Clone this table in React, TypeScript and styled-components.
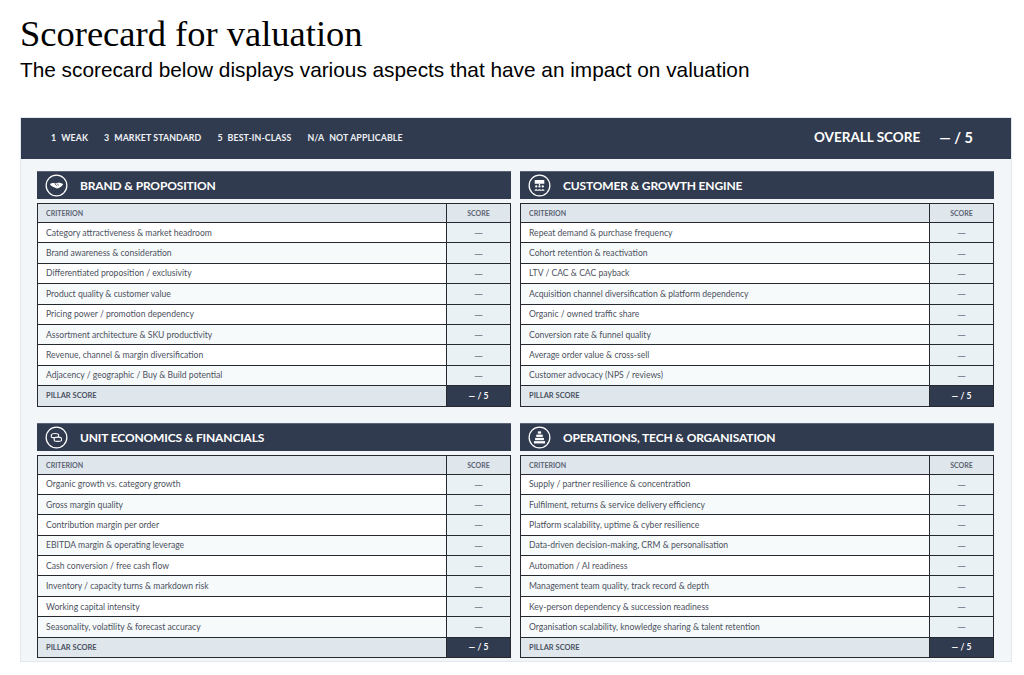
import styled, { createGlobalStyle } from 'styled-components';

const GlobalStyle = createGlobalStyle`
	html, body {
		margin: 0;
		padding: 0;
		background: #ffffff;
	}
`;

const DARK = '#313b4f';

type Pillar = {
	title: string;
	icon: 'brand' | 'customer' | 'unit' | 'ops';
	criteria: string[];
};

const pillars: Pillar[] = [
	{
		title: 'BRAND & PROPOSITION',
		icon: 'brand',
		criteria: [
			'Category attractiveness & market headroom',
			'Brand awareness & consideration',
			'Differentiated proposition / exclusivity',
			'Product quality & customer value',
			'Pricing power / promotion dependency',
			'Assortment architecture & SKU productivity',
			'Revenue, channel & margin diversification',
			'Adjacency / geographic / Buy & Build potential',
		],
	},
	{
		title: 'CUSTOMER & GROWTH ENGINE',
		icon: 'customer',
		criteria: [
			'Repeat demand & purchase frequency',
			'Cohort retention & reactivation',
			'LTV / CAC & CAC payback',
			'Acquisition channel diversification & platform dependency',
			'Organic / owned traffic share',
			'Conversion rate & funnel quality',
			'Average order value & cross-sell',
			'Customer advocacy (NPS / reviews)',
		],
	},
	{
		title: 'UNIT ECONOMICS & FINANCIALS',
		icon: 'unit',
		criteria: [
			'Organic growth vs. category growth',
			'Gross margin quality',
			'Contribution margin per order',
			'EBITDA margin & operating leverage',
			'Cash conversion / free cash flow',
			'Inventory / capacity turns & markdown risk',
			'Working capital intensity',
			'Seasonality, volatility & forecast accuracy',
		],
	},
	{
		title: 'OPERATIONS, TECH & ORGANISATION',
		icon: 'ops',
		criteria: [
			'Supply / partner resilience & concentration',
			'Fulfilment, returns & service delivery efficiency',
			'Platform scalability, uptime & cyber resilience',
			'Data-driven decision-making, CRM & personalisation',
			'Automation / AI readiness',
			'Management team quality, track record & depth',
			'Key-person dependency & succession readiness',
			'Organisation scalability, knowledge sharing & talent retention',
		],
	},
];

const legend = [
	['1', 'WEAK'],
	['3', 'MARKET STANDARD'],
	['5', 'BEST-IN-CLASS'],
	['N/A', 'NOT APPLICABLE'],
];

const PillarIcon = ({ kind }: { kind: Pillar['icon'] }) => (
	<svg width="23" height="23" viewBox="0 0 24 24" fill="none">
		<circle cx="12" cy="12" r="10.8" stroke="#ffffff" strokeWidth="1.3" />
		{kind === 'brand' && (
			<g fill="#ffffff">
				<path d="M5 10.4 L8.4 9 L10.6 10 L13.4 9 L15.6 9 L19 10.4 L17.6 12.4 L14.6 14.6 L12.4 15.2 L10.6 14.4 L8.6 13.6 L6.4 12.2 Z" />
				<path d="M10.4 10.4 L12.8 12.6 M12.4 10 L14.6 12" stroke={DARK} strokeWidth="0.7" />
			</g>
		)}
		{kind === 'customer' && (
			<g fill="#ffffff">
				<rect x="7" y="6.2" width="10" height="4" rx="0.4" />
				<rect x="11.4" y="10.2" width="1.2" height="1.4" />
				<circle cx="8.6" cy="13" r="1.2" />
				<circle cx="12" cy="13" r="1.2" />
				<circle cx="15.4" cy="13" r="1.2" />
				<path d="M6.8 17.4 C6.8 15.3 10.4 15.3 10.4 17.4 Z" />
				<path d="M10.2 17.4 C10.2 15.3 13.8 15.3 13.8 17.4 Z" />
				<path d="M13.6 17.4 C13.6 15.3 17.2 15.3 17.2 17.4 Z" />
			</g>
		)}
		{kind === 'unit' && (
			<g stroke="#ffffff" strokeWidth="1.1" fill={DARK}>
				<ellipse cx="10.4" cy="9.4" rx="3.8" ry="1.6" />
				<path d="M6.6 9.4 V11.4 C6.6 12.4 14.2 12.4 14.2 11.4 V9.4" />
				<ellipse cx="13.4" cy="13.2" rx="3.8" ry="1.6" />
				<path d="M9.6 13.2 V15.2 C9.6 16.3 17.2 16.3 17.2 15.2 V13.2" />
			</g>
		)}
		{kind === 'ops' && (
			<g fill="#ffffff">
				<rect x="10.3" y="5.6" width="3.4" height="2.4" />
				<rect x="8.6" y="9" width="6.8" height="2.4" />
				<rect x="7.4" y="12.4" width="9.2" height="2.4" />
				<rect x="6.2" y="15.8" width="11.6" height="2.4" />
			</g>
		)}
	</svg>
);

const App = () => {
	return (
		<Page>
			<GlobalStyle />
			<Title>Scorecard for valuation</Title>
			<Subtitle>The scorecard below displays various aspects that have an impact on valuation</Subtitle>
			<Card>
				<TopBar>
					<Legend>
						{legend.map(([num, label]) => (
							<LegendItem key={label}>
								<span>{num}</span>
								<span>{label}</span>
							</LegendItem>
						))}
					</Legend>
					<Overall>
						<span>OVERALL SCORE</span>
						<OverallValue>— / 5</OverallValue>
					</Overall>
				</TopBar>
				<Body>
					{pillars.map((p) => (
						<Section key={p.title}>
							<SectionHeader>
								<PillarIcon kind={p.icon} />
								<SectionTitle>{p.title}</SectionTitle>
							</SectionHeader>
							<Table>
								<colgroup>
									<col />
									<col style={{ width: 64 }} />
								</colgroup>
								<thead>
									<tr>
										<HeadCell>CRITERION</HeadCell>
										<HeadCell $center>SCORE</HeadCell>
									</tr>
								</thead>
								<tbody>
									{p.criteria.map((c, i) => (
										<Row key={c} $alt={i % 2 === 1}>
											<Cell>{c}</Cell>
											<ScoreCell>—</ScoreCell>
										</Row>
									))}
									<tr>
										<PillarLabel>PILLAR SCORE</PillarLabel>
										<PillarValue>— / 5</PillarValue>
									</tr>
								</tbody>
							</Table>
						</Section>
					))}
				</Body>
			</Card>
		</Page>
	);
};

const Page = styled.div`
	padding: 14px 12px 0 20px;
	font-family: Lato, 'Open Sans', sans-serif;
`;

const Title = styled.h1`
	margin: 0;
	font-family: 'Liberation Serif', serif;
	font-weight: normal;
	font-size: 36.5px;
	line-height: 40px;
	color: #000;
`;

const Subtitle = styled.p`
	margin: 4px 0 0;
	font-family: 'Liberation Sans', sans-serif;
	font-size: 20.8px;
	line-height: 24px;
	color: #000;
`;

const Card = styled.div`
	margin-top: 35px;
	width: 992px;
	background: #f2f6f9;
	border: 1px solid #e1e8ee;
	box-sizing: border-box;
`;

const TopBar = styled.div`
	height: 41px;
	background: ${DARK};
	display: flex;
	align-items: center;
	justify-content: space-between;
	padding: 0 38px 0 30px;
	color: #ffffff;
`;

const Legend = styled.div`
	display: flex;
	gap: 16px;
	margin-top: -3px;
`;

const LegendItem = styled.div`
	display: flex;
	gap: 5px;
	font-size: 8.8px;
	font-weight: 700;
	letter-spacing: 0.1px;
	color: #eef1f5;
`;

const Overall = styled.div`
	display: flex;
	align-items: center;
	gap: 19px;
	font-size: 13.5px;
	font-weight: 700;
	margin-top: -3px;
`;

const OverallValue = styled.span`
	font-size: 14.5px;
`;

const Body = styled.div`
	display: grid;
	grid-template-columns: 474px 474px;
	column-gap: 9px;
	row-gap: 16px;
	padding: 12px 16px 3px 16px;
`;

const Section = styled.section`
	display: flex;
	flex-direction: column;
	gap: 4px;
`;

const SectionHeader = styled.div`
	height: 28px;
	background: ${DARK};
	display: flex;
	align-items: center;
	gap: 12px;
	padding: 0 8px;
	border-top: 1px solid #5b6577;
	box-sizing: border-box;
`;

const SectionTitle = styled.span`
	color: #ffffff;
	font-size: 12px;
	font-weight: 700;
	letter-spacing: -0.15px;
`;

const Table = styled.table`
	width: 100%;
	border-collapse: collapse;
	table-layout: fixed;
	border: 1.5px solid #262a30;
	font-size: 8.6px;
	color: #4b5160;
`;

const HeadCell = styled.th<{ $center?: boolean }>`
	height: 18px;
	padding: 0 8px;
	background: #dfe7ed;
	border: 1.5px solid #262a30;
	text-align: ${(p) => (p.$center ? 'center' : 'left')};
	font-size: 7px;
	font-weight: 700;
	color: #5c6372;
`;

const Row = styled.tr<{ $alt: boolean }>`
	background: ${(p) => (p.$alt ? '#f7fafb' : '#ffffff')};
`;

const Cell = styled.td`
	height: 19.4px;
	padding: 0 8px;
	border: 1.5px solid #262a30;
	white-space: nowrap;
	overflow: hidden;
`;

const ScoreCell = styled.td`
	border: 1.5px solid #262a30;
	background: #eaf1f4;
	text-align: center;
	font-size: 11.5px;
	color: #6e747e;
`;

const PillarLabel = styled.td`
	height: 19.4px;
	padding: 0 8px;
	border: 1.5px solid #262a30;
	background: #dfe7ed;
	font-size: 7.5px;
	font-weight: 700;
	color: #4b5160;
`;

const PillarValue = styled.td`
	border: 1.5px solid #262a30;
	background: ${DARK};
	color: #ffffff;
	text-align: center;
	font-size: 8.5px;
	font-weight: 700;
`;

export default App;
